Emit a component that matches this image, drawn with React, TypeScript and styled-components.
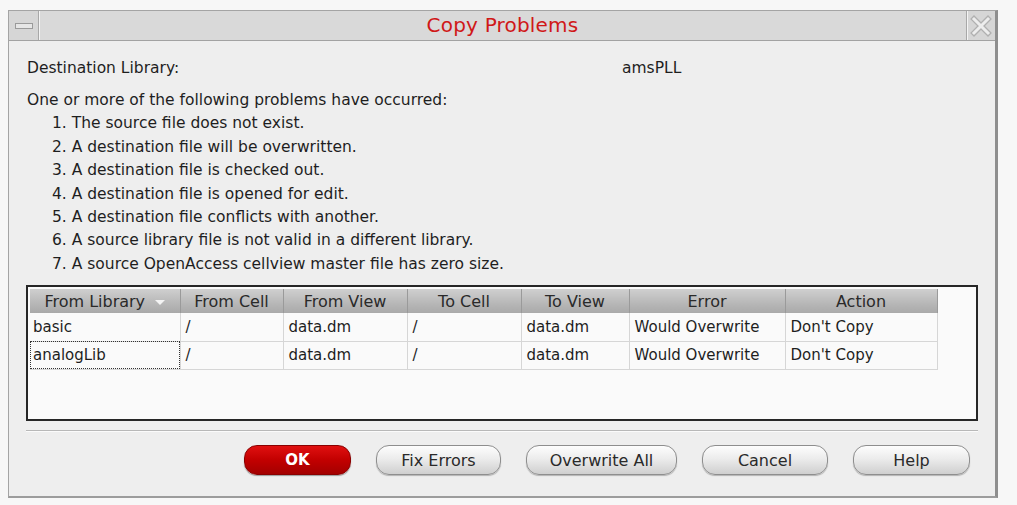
import * as React from 'react';
import styled, { createGlobalStyle } from 'styled-components';

const GlobalStyle = createGlobalStyle`
    html, body {
        margin: 0;
        padding: 0;
        background: #f7f7f7;
    }
    body {
        font-family: "DejaVu Sans", "Liberation Sans", sans-serif;
        color: #1e1e1e;
    }
`;

const Page = styled.div`
    width: 1017px;
    height: 505px;
    padding: 10px 0 0 8px;
    box-sizing: border-box;
`;

const Window = styled.div`
    width: 990px;
    height: 488px;
    box-sizing: border-box;
    background: #eeeeee;
    border-top: 1px solid #a4a4a4;
    border-left: 1px solid #a4a4a4;
    border-right: 3px solid #8e8e8e;
    border-bottom: 2px solid #9c9c9c;
    display: flex;
    flex-direction: column;
`;

const TitleBar = styled.div`
    height: 30px;
    display: flex;
    background: #d9d9d9;
    border-bottom: 1px solid #a2a2a2;
    box-sizing: border-box;
`;

const TitleButton = styled.div<{ $side: 'left' | 'right' }>`
    width: ${p => (p.$side === 'left' ? 29 : 28)}px;
    flex: none;
    display: flex;
    align-items: center;
    justify-content: center;
    background: #d6d6d6;
    ${p =>
        p.$side === 'left'
            ? 'border-right: 1px solid #a8a8a8; box-shadow: 1px 0 0 #f4f4f4;'
            : 'border-left: 1px solid #a8a8a8; box-shadow: inset 1px 0 0 #f4f4f4;'}
`;

const Title = styled.div`
    flex: 1;
    text-align: center;
    font-size: 20px;
    line-height: 29px;
    color: #d01818;
    letter-spacing: 0.2px;
`;

const Content = styled.div`
    flex: 1;
    padding: 16px 17px 0 18px;
    display: flex;
    flex-direction: column;
`;

const TextLine = styled.div<{ $indent?: boolean }>`
    font-size: 15.5px;
    line-height: 23.4px;
    height: 23.4px;
    white-space: nowrap;
    padding-left: ${p => (p.$indent ? 25 : 0)}px;
`;

const DestRow = styled.div`
    display: grid;
    grid-template-columns: 595px auto;
    font-size: 15.5px;
    line-height: 23px;
    margin-bottom: 9px;
`;

const List = styled.div`
    display: flex;
    flex-direction: column;
`;

const TableFrame = styled.div`
    margin-top: 9px;
    margin-left: -1px;
    width: 952px;
    height: 136px;
    box-sizing: border-box;
    border: 2px solid #262626;
    background: #fafafa;
    padding: 2px;
`;

const Grid = styled.table`
    border-collapse: collapse;
    table-layout: fixed;
    font-size: 15px;
`;

const HeadCell = styled.th`
    height: 24px;
    padding: 0;
    font-weight: normal;
    font-size: 16px;
    color: #2a2a2a;
    text-align: center;
    white-space: nowrap;
    background: linear-gradient(#cfcfcf, #b7b7b7 60%, #a9a9a9);
    border-left: 1px solid #dedede;
    border-right: 1px solid #9a9a9a;
    &:first-child {
        border-left: none;
    }
`;

const SortArrow = styled.span`
    display: inline-block;
    width: 0;
    height: 0;
    margin-left: 10px;
    vertical-align: middle;
    border-left: 5px solid transparent;
    border-right: 5px solid transparent;
    border-top: 5px solid #f4f4f4;
`;

const Cell = styled.td<{ $focus?: boolean }>`
    height: 28px;
    padding: 0 5px;
    box-sizing: border-box;
    white-space: nowrap;
    overflow: hidden;
    color: #1e1e1e;
    background: #fafafa;
    border: 1px solid #d6d6d6;
    border-top: none;
    &:first-child {
        border-left: none;
        padding-left: 3px;
    }
    ${p => (p.$focus ? 'outline: 1px dotted #333; outline-offset: -1px;' : '')}
`;

const Separator = styled.div`
    margin-top: 9px;
    margin-left: -1px;
    width: 952px;
    height: 1px;
    background: #b8b8b8;
    box-shadow: 0 1px 0 #fbfbfb;
`;

const ButtonRow = styled.div`
    display: flex;
    justify-content: flex-end;
    gap: 25px;
    margin-top: 14px;
    padding-right: 8px;
`;

const Button = styled.button<{ $w: number; $primary?: boolean }>`
    width: ${p => p.$w}px;
    height: 30px;
    border-radius: 13px;
    font-family: "DejaVu Sans", "Liberation Sans", sans-serif;
    font-size: 16px;
    padding: 0;
    cursor: pointer;
    ${p =>
        p.$primary
            ? `
        color: #ffffff;
        font-weight: bold;
        font-size: 15px;
        border: 1px solid #8a0000;
        background: linear-gradient(#e01010, #c20000 50%, #a30000);
        box-shadow: 0 1px 1px rgba(0,0,0,0.35);
    `
            : `
        color: #2a2a2a;
        border: 1px solid #8e8e8e;
        background: linear-gradient(#fdfdfd, #ececec 45%, #cfcfcf);
        box-shadow: 0 1px 1px rgba(0,0,0,0.25);
    `}
`;

const problems = [
    '1. The source file does not exist.',
    '2. A destination file will be overwritten.',
    '3. A destination file is checked out.',
    '4. A destination file is opened for edit.',
    '5. A destination file conflicts with another.',
    '6. A source library file is not valid in a different library.',
    '7. A source OpenAccess cellview master file has zero size.',
];

const columns = [
    { title: 'From Library', width: 150 },
    { title: 'From Cell', width: 103 },
    { title: 'From View', width: 124 },
    { title: 'To Cell', width: 114 },
    { title: 'To View', width: 108 },
    { title: 'Error', width: 156 },
    { title: 'Action', width: 152 },
];

const rows = [
    ['basic', '/', 'data.dm', '/', 'data.dm', 'Would Overwrite', "Don't Copy"],
    ['analogLib', '/', 'data.dm', '/', 'data.dm', 'Would Overwrite', "Don't Copy"],
];

const MinimizeIcon = () => (
    <svg width="18" height="6" viewBox="0 0 18 6">
        <rect x="0.5" y="0.5" width="17" height="5" fill="#e6e6e6" stroke="#9a9a9a" />
    </svg>
);

const CloseIcon = () => (
    <svg width="22" height="22" viewBox="0 0 22 22">
        <path d="M4 4 L18 18 M18 4 L4 18" stroke="#b0b0b0" strokeWidth="5.5" strokeLinecap="square" fill="none" />
        <path d="M4 4 L18 18 M18 4 L4 18" stroke="#ededed" strokeWidth="3" strokeLinecap="square" fill="none" />
    </svg>
);

export default function App() {
    return (
        <Page>
            <GlobalStyle />
            <Window>
                <TitleBar>
                    <TitleButton $side="left">
                        <MinimizeIcon />
                    </TitleButton>
                    <Title>Copy Problems</Title>
                    <TitleButton $side="right">
                        <CloseIcon />
                    </TitleButton>
                </TitleBar>
                <Content>
                    <DestRow>
                        <span>Destination Library:</span>
                        <span>amsPLL</span>
                    </DestRow>
                    <TextLine>One or more of the following problems have occurred:</TextLine>
                    <List>
                        {problems.map(p => (
                            <TextLine key={p} $indent>
                                {p}
                            </TextLine>
                        ))}
                    </List>
                    <TableFrame>
                        <Grid>
                            <colgroup>
                                {columns.map(c => (
                                    <col key={c.title} style={{ width: c.width }} />
                                ))}
                            </colgroup>
                            <thead>
                                <tr>
                                    {columns.map((c, i) => (
                                        <HeadCell key={c.title}>
                                            {c.title}
                                            {i === 0 && <SortArrow />}
                                        </HeadCell>
                                    ))}
                                </tr>
                            </thead>
                            <tbody>
                                {rows.map((r, ri) => (
                                    <tr key={ri}>
                                        {r.map((v, ci) => (
                                            <Cell key={ci} $focus={ri === 1 && ci === 0}>
                                                {v}
                                            </Cell>
                                        ))}
                                    </tr>
                                ))}
                            </tbody>
                        </Grid>
                    </TableFrame>
                    <Separator />
                    <ButtonRow>
                        <Button $w={107} $primary>OK</Button>
                        <Button $w={125}>Fix Errors</Button>
                        <Button $w={151}>Overwrite All</Button>
                        <Button $w={126}>Cancel</Button>
                        <Button $w={117}>Help</Button>
                    </ButtonRow>
                </Content>
            </Window>
        </Page>
    );
}
